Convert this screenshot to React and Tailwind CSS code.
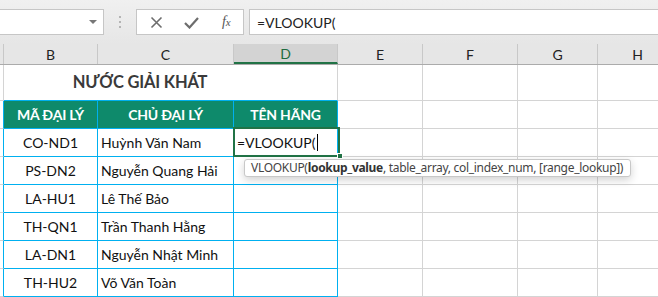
const COLS = [
  { k: 'A', w: 'w-[4px]' },
  { k: 'B', w: 'w-[94px]' },
  { k: 'C', w: 'w-[136px]' },
  { k: 'D', w: 'w-[104px]' },
  { k: 'E', w: 'w-[85px]' },
  { k: 'F', w: 'w-[95px]' },
  { k: 'G', w: 'w-[80px]' },
  { k: 'H', w: 'w-[80px]' },
]

const ROWS = [
  ['CO-ND1', 'Huỳnh Văn Nam'],
  ['PS-DN2', 'Nguyễn Quang Hải'],
  ['LA-HU1', 'Lê Thế Bảo'],
  ['TH-QN1', 'Trần Thanh Hằng'],
  ['LA-DN1', 'Nguyễn Nhật Minh'],
  ['TH-HU2', 'Võ Văn Toàn'],
]

const cellFont = { fontFamily: 'Lato, "Noto Sans", sans-serif' }

function GrayTail() {
  return (
    <>
      <div className="w-[85px] shrink-0 border-r border-b border-[#d4d4d4]" />
      <div className="w-[95px] shrink-0 border-r border-b border-[#d4d4d4]" />
      <div className="w-[80px] shrink-0 border-r border-b border-[#d4d4d4]" />
      <div className="w-[80px] shrink-0 border-r border-b border-[#d4d4d4]" />
    </>
  )
}

function FormulaBar() {
  return (
    <div className="h-[44px] flex items-start pt-[9px] bg-gradient-to-b from-[#f0f0f0] to-[#e6e6e6]">
      <div className="w-[104px] shrink-0 h-[26px] bg-white border border-[#c6c6c6] border-l-0 flex items-center justify-end pr-[6px]">
        <svg width="8" height="5" viewBox="0 0 8 5">
          <path d="M0 0 L8 0 L4 4 Z" fill="#777" />
        </svg>
      </div>
      <div className="w-[32px] shrink-0 h-[26px] flex flex-col items-center justify-center gap-[3px]">
        <span className="w-[2px] h-[2px] bg-[#b4b4b4]" />
        <span className="w-[2px] h-[2px] bg-[#b4b4b4]" />
        <span className="w-[2px] h-[2px] bg-[#b4b4b4]" />
      </div>
      <div className="w-[108px] shrink-0 h-[26px] bg-white border border-[#c6c6c6] flex items-center">
        <div className="w-[36px] flex justify-center pl-[3px]">
          <svg width="13" height="13" viewBox="0 0 13 13">
            <path d="M1.5 1.5 L11.5 11.5 M11.5 1.5 L1.5 11.5" stroke="#6d6d6d" strokeWidth="1.6" />
          </svg>
        </div>
        <div className="w-[36px] flex justify-center pl-[2px]">
          <svg width="15" height="13" viewBox="0 0 15 13">
            <path d="M1 7 L5.5 11.5 L14 2" stroke="#6d6d6d" strokeWidth="2.2" fill="none" />
          </svg>
        </div>
        <div className="w-[36px] flex justify-center pl-[2px]">
          <span className="italic text-[14px] text-[#555] leading-none" style={{ fontFamily: '"Liberation Serif", serif' }}>
            f<span className="text-[11px]">x</span>
          </span>
        </div>
      </div>
      <div className="w-[5px] shrink-0" />
      <div className="flex-1 h-[26px] bg-white border border-[#c6c6c6] border-r-0 flex items-center pl-[7px] text-[14px] text-[#222]" style={cellFont}>
        =VLOOKUP(
      </div>
    </div>
  )
}

function ColHeaders() {
  return (
    <div className="flex h-[21px] bg-[#e6e6e6] border-b border-[#ababab]" style={cellFont}>
      {COLS.map((c) => (
        <div
          key={c.k}
          className={`${c.w} shrink-0 flex items-center justify-center text-[14px] border-r border-[#c8c8c8] ${
            c.k === 'D' ? 'bg-[#d3d3d3] text-[#1e6b40] border-b-2 border-b-[#217346]' : 'text-[#222]'
          }`}
        >
          {c.k === 'A' ? '' : c.k}
        </div>
      ))}
    </div>
  )
}

export default function App() {
  return (
    <div className="relative w-[658px] h-[297px] overflow-hidden bg-white" style={cellFont}>
      <FormulaBar />
      <ColHeaders />

      <div className="flex h-[36px]">
        <div className="w-[4px] shrink-0 border-r border-b border-[#d4d4d4]" />
        <div className="w-[334px] shrink-0 border-r border-r-[#d4d4d4] border-b border-b-[#00b0f0] flex items-center">
          <div className="w-[272px] text-center text-[16.5px] tracking-[-0.2px] font-bold text-[#3a3a3a] pb-[1px]">NƯỚC GIẢI KHÁT</div>
        </div>
        <GrayTail />
      </div>

      <div className="flex h-[28px] text-white font-bold text-[14px] tracking-[-0.2px]">
        <div className="w-[4px] shrink-0 border-r border-r-[#00b0f0] border-b border-b-[#d4d4d4]" />
        <div className="w-[94px] shrink-0 bg-[#0e8a6b] border-r border-b border-[#00b0f0] flex items-center justify-center">MÃ ĐẠI LÝ</div>
        <div className="w-[136px] shrink-0 bg-[#0e8a6b] border-r border-b border-[#00b0f0] flex items-center justify-center">CHỦ ĐẠI LÝ</div>
        <div className="w-[104px] shrink-0 bg-[#0e8a6b] border-r border-b border-[#00b0f0] flex items-center justify-center">TÊN HÃNG</div>
        <GrayTail />
      </div>

      {ROWS.map(([code, name], i) => (
        <div key={code} className="flex h-[28px] text-[14px] text-[#111]">
          <div className="w-[4px] shrink-0 border-r border-r-[#00b0f0] border-b border-b-[#d4d4d4]" />
          <div className="w-[94px] shrink-0 border-r border-b border-[#00b0f0] flex items-center justify-center">{code}</div>
          <div className="w-[136px] shrink-0 border-r border-b border-[#00b0f0] flex items-center pl-[3px]">{name}</div>
          <div className="w-[104px] shrink-0 border-r border-b border-[#00b0f0] flex items-center pl-[3px] whitespace-nowrap">
            {i === 0 && (
              <>
                =VLOOKUP(<span className="inline-block w-[1px] h-[17px] bg-black ml-[2px]" />
              </>
            )}
          </div>
          <GrayTail />
        </div>
      ))}

      {/* active cell outline */}
      <div className="absolute left-[233px] top-[127px] w-[107px] h-[30px] border-2 border-[#217346] pointer-events-none" />
      <div className="absolute left-[337px] top-[153px] w-[6px] h-[6px] bg-[#217346] border border-white" />

      {/* function tooltip */}
      <div
        className="absolute left-[244px] top-[159px] h-[18px] pl-[6px] pr-[7px] flex items-center bg-white border border-[#c8c8c8] rounded-[3px] shadow-[0_3px_8px_rgba(0,0,0,0.18)] text-[12px] tracking-[-0.3px] text-[#444] whitespace-nowrap"
        style={{ fontFamily: '"Noto Sans", "Open Sans", sans-serif' }}
      >
        VLOOKUP(<b className="font-bold text-[#333]">lookup_value</b>, table_array, col_index_num, [range_lookup])
      </div>
    </div>
  )
}
